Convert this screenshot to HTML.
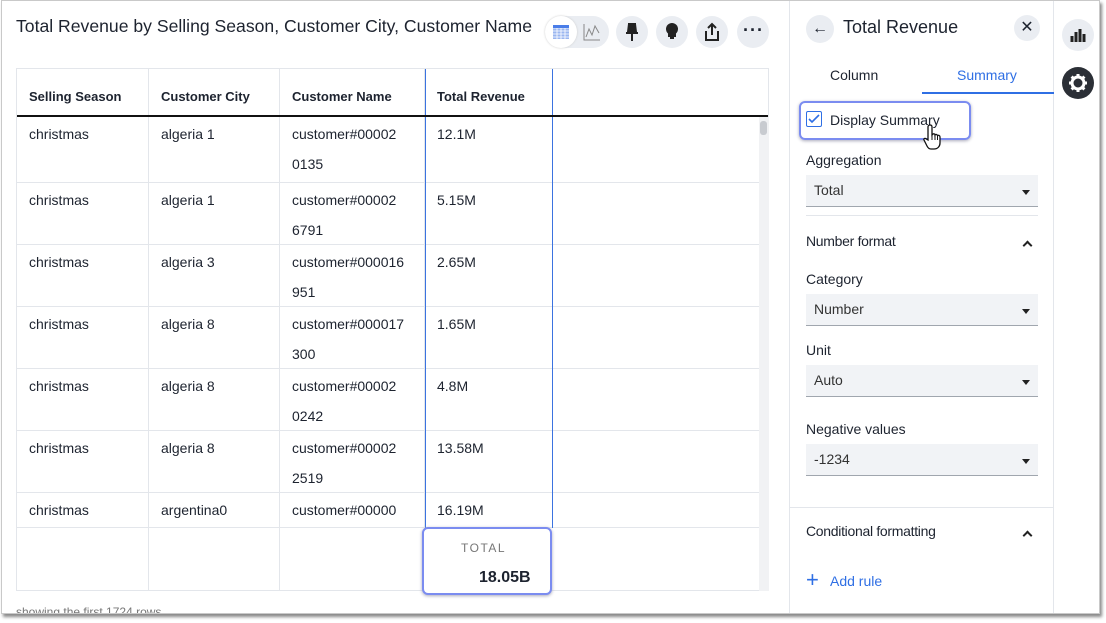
<!DOCTYPE html>
<html><head><style>
*{box-sizing:border-box;margin:0;padding:0}
body{width:1106px;height:623px;background:#fff;font-family:"Liberation Sans",Arial,sans-serif;color:#1d232f;position:relative;overflow:hidden}
.frame{position:absolute;left:1px;top:0px;width:1099px;height:614px;border:1px solid #c9c9c9;box-shadow:2px 3px 3px #8a8a8a;background:#fff;overflow:hidden}
.abs{position:absolute}
.title{left:14px;top:15px;font-size:17.6px;color:#1d232f}
.btn{width:32px;height:32px;border-radius:50%;background:#eaedf2;top:15px}
.tbl{left:14px;top:67px;width:753px;height:523px;border:1px solid #e3e6eb}
.col{position:absolute;top:0;bottom:0;border-right:1px solid #e3e6eb}
.hd{position:absolute;top:20px;font-size:13px;font-weight:bold}
.row{position:absolute;left:0;width:743px;border-bottom:1px solid #e3e6eb}
.c{position:absolute;font-size:14px;line-height:30px;top:2px}
.side{left:787px;top:0;width:265px;height:614px;border-left:1px solid #e3e6eb;border-right:1px solid #e3e6eb}
.lbl{position:absolute;left:16px;font-size:14px}
.sel{position:absolute;left:16px;width:232px;height:32px;background:#f1f3f6;border-bottom:1px solid #a0a6ae;font-size:14px;padding:7px 8px;color:#333}
.sel:after{content:"";position:absolute;right:8px;top:15px;border:4px solid transparent;border-top:5px solid #222}
.chev{position:absolute;right:22px;width:7px;height:7px;border-left:2px solid #222;border-top:2px solid #222;transform:rotate(45deg)}
</style></head><body>
<div class="frame">
<div class="abs title">Total Revenue by Selling Season, Customer City, Customer Name</div>
<div class="abs" style="left:543px;top:15px;width:64px;height:32px;border-radius:16px;background:#eaedf2"></div>
<div class="abs" style="left:543px;top:15px;width:32px;height:32px;border-radius:50%;background:#fff;box-shadow:0 0 2px #ccc"></div>
<svg class="abs" style="left:550px;top:22px" width="18" height="18"><rect x="1" y="2" width="16" height="14" fill="#9bb6f0"/><path d="M1 5h16M1 8h16M1 11h16M1 14h16M5 2v14M9 2v14M13 2v14" stroke="#fff" stroke-width=".8"/><rect x="1" y="2" width="16" height="3" fill="#4a7de8"/></svg>
<svg class="abs" style="left:581px;top:22px" width="18" height="18"><path d="M1 1v16h16M3 14l3-8 3 6 3-9 4 7" stroke="#888" fill="none"/></svg>
<div class="abs btn" style="left:614px"></div>
<svg class="abs" style="left:622px;top:22px" width="16" height="18"><path d="M4 1h8M5 1l-1 8h8l-1-8M2 10h12M8 10v8" stroke="#222" stroke-width="2" fill="#222"/></svg>
<div class="abs btn" style="left:654px"></div>
<svg class="abs" style="left:663px;top:21px" width="14" height="20"><circle cx="7" cy="7" r="6" fill="#222"/><path d="M4 11h6v3H4zM5 16h4" stroke="#222" stroke-width="2" fill="#222"/></svg>
<div class="abs btn" style="left:694px"></div>
<svg class="abs" style="left:701px;top:21px" width="18" height="20"><path d="M9 13V2M5 6l4-4 4 4M3 9v9h12V9" stroke="#222" stroke-width="2" fill="none"/></svg>
<div class="abs btn" style="left:735px"></div>
<div class="abs" style="left:741px;top:19px;font-size:18px;font-weight:bold;letter-spacing:1px">···</div>

<div class="abs tbl">
<div class="col" style="left:0;width:132px"></div>
<div class="col" style="left:132px;width:131px"></div>
<div class="col" style="left:263px;width:145px"></div>
<div class="hd" style="left:12px">Selling Season</div><div class="hd" style="left:144px">Customer City</div><div class="hd" style="left:275px">Customer Name</div><div class="hd" style="left:420px">Total Revenue</div>
<div class="row" style="top:48px;height:66px"><div class="c" style="left:12px">christmas</div><div class="c" style="left:144px">algeria 1</div><div class="c" style="left:275px">customer#00002<br>0135</div><div class="c" style="left:420px">12.1M</div></div>
<div class="row" style="top:114px;height:62px"><div class="c" style="left:12px">christmas</div><div class="c" style="left:144px">algeria 1</div><div class="c" style="left:275px">customer#00002<br>6791</div><div class="c" style="left:420px">5.15M</div></div>
<div class="row" style="top:176px;height:62px"><div class="c" style="left:12px">christmas</div><div class="c" style="left:144px">algeria 3</div><div class="c" style="left:275px">customer#000016<br>951</div><div class="c" style="left:420px">2.65M</div></div>
<div class="row" style="top:238px;height:62px"><div class="c" style="left:12px">christmas</div><div class="c" style="left:144px">algeria 8</div><div class="c" style="left:275px">customer#000017<br>300</div><div class="c" style="left:420px">1.65M</div></div>
<div class="row" style="top:300px;height:62px"><div class="c" style="left:12px">christmas</div><div class="c" style="left:144px">algeria 8</div><div class="c" style="left:275px">customer#00002<br>0242</div><div class="c" style="left:420px">4.8M</div></div>
<div class="row" style="top:362px;height:62px"><div class="c" style="left:12px">christmas</div><div class="c" style="left:144px">algeria 8</div><div class="c" style="left:275px">customer#00002<br>2519</div><div class="c" style="left:420px">13.58M</div></div>
<div class="row" style="top:424px;height:35px"><div class="c" style="left:12px">christmas</div><div class="c" style="left:144px">argentina0</div><div class="c" style="left:275px">customer#00000</div><div class="c" style="left:420px">16.19M</div></div>
<div class="abs" style="left:408px;top:0;width:1px;height:459px;background:#3b73e0"></div>
<div class="abs" style="left:535px;top:0;width:1px;height:459px;background:#3b73e0"></div>
<div class="abs" style="left:0;top:46px;height:2px;width:751px;background:#111"></div>
<div class="abs" style="left:742px;top:48px;width:10px;height:474px;background:#f1f2f4"></div>
<div class="abs" style="left:743px;top:52px;width:7px;height:14px;background:#c8cbd0;border-radius:3px"></div>
<div class="abs" style="left:405px;top:458px;width:130px;height:68px;border:2px solid #7b8cf0;border-radius:6px;background:#fff;box-shadow:0 1px 3px #aab"></div>
<div class="abs" style="left:444px;top:472px;font-size:12px;color:#777;letter-spacing:1.5px">TOTAL</div>
<div class="abs" style="left:462px;top:500px;font-size:16px;font-weight:bold">18.05B</div>
</div>
<div class="abs" style="left:14px;top:604px;font-size:12px;color:#777">showing the first 1724 rows</div>

<div class="abs side">
<div class="abs" style="left:16px;top:14px;width:28px;height:28px;border-radius:50%;background:#eaedf2;font-size:16px;text-align:center;line-height:27px">←</div>
<div class="abs" style="left:53px;top:16px;font-size:18px">Total Revenue</div>
<div class="abs" style="left:224px;top:14px;width:26px;height:26px;border-radius:50%;background:#eaedf2;font-size:16px;text-align:center;line-height:25px">✕</div>
<div class="abs" style="left:40px;top:66px;font-size:14px">Column</div>
<div class="abs" style="left:167px;top:66px;font-size:14px;color:#2f6fe4">Summary</div>
<div class="abs" style="left:132px;top:91px;width:132px;height:2px;background:#2f6fe4"></div>
<div class="abs" style="left:9px;top:100px;width:172px;height:39px;border:2px solid #7b8cf0;border-radius:6px;box-shadow:0 1px 3px #aab"></div>
<div class="abs" style="left:16px;top:110px;width:16px;height:16px;border:1.5px solid #2f6fe4;border-radius:2px"></div>
<svg class="abs" style="left:18px;top:112px" width="12" height="12"><path d="M1 6l3 3 7-7" stroke="#2f6fe4" stroke-width="1.6" fill="none"/></svg>
<div class="abs" style="left:40px;top:111px;font-size:14px">Display Summary</div>
<svg class="abs" style="left:132px;top:122px" width="24" height="30"><path d="M8 2c1.5 0 2 1 2 2v8l1-1c1-.5 2 0 2 1 1-1 2-.5 2.5.5 1-.5 2.5 0 2.5 1.5v6c0 3-2 6-6 6h-3c-2 0-3-1-4-3l-3-6c-.5-1 .5-2 1.5-1.5L6 17V4c0-1 .5-2 2-2z" fill="#fff" stroke="#111" stroke-width="1.3"/><path d="M10 12v5M13 12v5M15.5 13v4" stroke="#111"/></svg>
<div class="lbl" style="top:151px">Aggregation</div>
<div class="sel" style="top:174px">Total</div>
<div class="abs" style="left:16px;top:214px;width:232px;height:1px;background:#e3e6eb"></div>
<div class="lbl" style="top:232px;font-size:14px;letter-spacing:-.3px">Number format</div><div class="chev" style="top:241px"></div>
<div class="lbl" style="top:270px">Category</div>
<div class="sel" style="top:293px">Number</div>
<div class="lbl" style="top:341px">Unit</div>
<div class="sel" style="top:364px">Auto</div>
<div class="lbl" style="top:420px">Negative values</div>
<div class="sel" style="top:443px">-1234</div>
<div class="abs" style="left:0;top:506px;width:264px;height:1px;background:#e3e6eb"></div>
<div class="lbl" style="top:522px;font-size:14px;letter-spacing:-.3px">Conditional formatting</div><div class="chev" style="top:531px"></div>
<div class="abs" style="left:16px;top:568px;font-size:22px;color:#2f6fe4;line-height:22px">+</div>
<div class="abs" style="left:40px;top:572px;font-size:14px;color:#2f6fe4">Add rule</div>
</div>
<div class="abs" style="left:1060px;top:18px;width:32px;height:32px;border-radius:50%;background:#eaedf2"></div>
<svg class="abs" style="left:1068px;top:26px" width="16" height="16"><path d="M2 9v6M6 5v10M10 2v13M14 7v8" stroke="#222" stroke-width="3"/></svg>
<div class="abs" style="left:1060px;top:66px;width:32px;height:32px;border-radius:50%;background:#2b2f36"></div>
<svg class="abs" style="left:1066px;top:72px" width="20" height="20" viewBox="0 0 20 20"><circle cx="10" cy="10" r="6" fill="none" stroke="#fff" stroke-width="3"/><path d="M10 1v4M10 15v4M1 10h4M15 10h4M3.6 3.6l2.8 2.8M13.6 13.6l2.8 2.8M3.6 16.4l2.8-2.8M13.6 6.4l2.8-2.8" stroke="#fff" stroke-width="3"/><circle cx="10" cy="10" r="2.5" fill="#2b2f36"/></svg>
</div>
</body></html>
